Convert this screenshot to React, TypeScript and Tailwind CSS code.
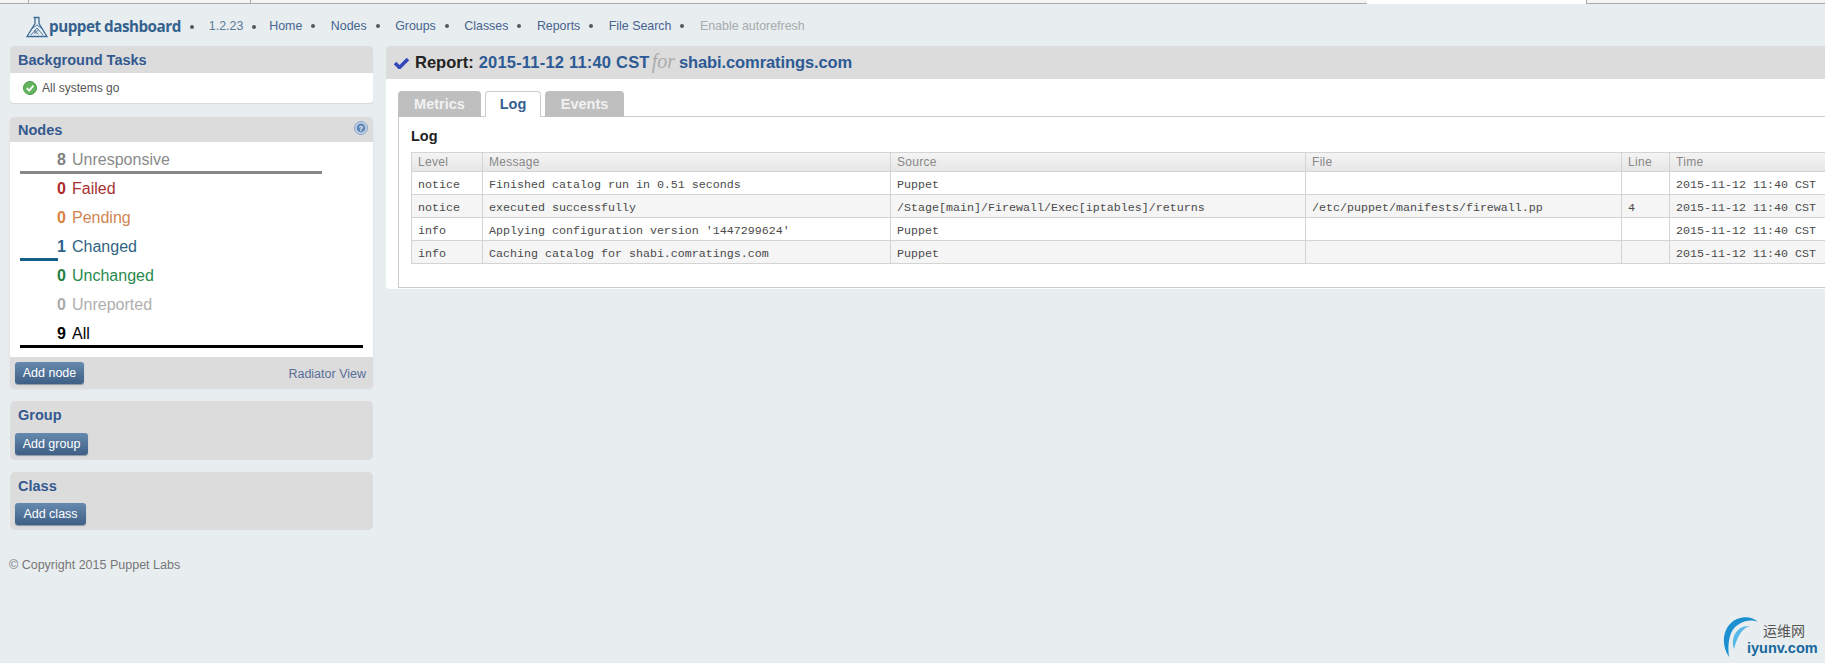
const navItems = ['Home', 'Nodes', 'Groups', 'Classes', 'Reports', 'File Search'];

const nodeRows = [
  { count: 8, barWidth: 302, label: 'Unresponsive', num: 'text-[#808080]', text: 'text-[#8a8a8a]', bar: '#888888' },
  { count: 0, barWidth: 0, label: 'Failed', num: 'text-[#b02a2a]', text: 'text-[#a83232]', bar: '#a83232' },
  { count: 0, barWidth: 0, label: 'Pending', num: 'text-[#d9823f]', text: 'text-[#d08552]', bar: '#d08552' },
  { count: 1, barWidth: 38, label: 'Changed', num: 'text-[#2f5f8a]', text: 'text-[#2f6385]', bar: '#126088' },
  { count: 0, barWidth: 0, label: 'Unchanged', num: 'text-[#1f8040]', text: 'text-[#2c8a4c]', bar: '#2c8a4c' },
  { count: 0, barWidth: 0, label: 'Unreported', num: 'text-[#aaaaaa]', text: 'text-[#aeaeae]', bar: '#aeaeae' },
  { count: 9, barWidth: 343, label: 'All', num: 'text-black', text: 'text-black', bar: '#000000' },
];

const logRows = [
  {
    level: 'notice',
    message: 'Finished catalog run in 0.51 seconds',
    source: 'Puppet',
    file: '',
    line: '',
  },
  {
    level: 'notice',
    message: 'executed successfully',
    source: '/Stage[main]/Firewall/Exec[iptables]/returns',
    file: '/etc/puppet/manifests/firewall.pp',
    line: '4',
  },
  {
    level: 'info',
    message: "Applying configuration version '1447299624'",
    source: 'Puppet',
    file: '',
    line: '',
  },
  {
    level: 'info',
    message: 'Caching catalog for shabi.comratings.com',
    source: 'Puppet',
    file: '',
    line: '',
  },
];

const Bullet = () => <span className="ml-[9px] mr-[15.5px] h-1 w-1 rounded-full bg-[#555]" />;

const Button = ({ label, width }: { label: string; width: string }) => (
  <button
    className={`${width} block h-[22px] rounded-[3px] bg-gradient-to-b from-[#668aaf] to-[#3f5f85] text-center text-[12.5px] leading-[22px] text-white shadow-[0_1px_1px_#8a97a5]`}
  >
    {label}
  </button>
);

const Logo = () => (
  <svg viewBox="0 0 22 22" className="h-[22px] w-[22px]" fill="none" stroke="#3d6c98" strokeWidth="1.3">
    <path d="M7.5 1.5h6M9 1.5v6L1 20.5h20L13 7.5v-6" />
    <path d="M5.5 13 11 9l5.5 4M5 19l6-7 6 7" strokeWidth="0.9" />
    <path d="M9 14v4M12.5 14l-3 2 3 2" strokeWidth="0.9" />
  </svg>
);

const SideHeading = ({ title }: { title: string }) => (
  <h2 className="text-[14.5px] font-bold leading-[25px] text-[#33598f]">{title}</h2>
);

const App = () => {
  return (
    <div className="relative h-[663px] w-full overflow-hidden bg-[#e8edef] font-['Liberation_Sans',Arial,sans-serif]">
      {/* Browser tab strip left over at the top */}
      <div className="flex h-1 bg-[#e8edef]">
        <div className="w-[28px] border-b border-[#aaa] bg-[#f4f4f4]" />
        <div className="w-[222px] border-b border-l border-[#aaa] bg-[#f4f4f4]" />
        <div className="w-[1117px] border-b border-l border-[#aaa] bg-[#f4f4f4]" />
        <div className="w-[219px] bg-white" />
        <div className="flex-1 border-b border-l border-[#aaa] bg-[#f4f4f4]" />
      </div>

      {/* Navbar */}
      <nav className="flex h-[42px] items-center pl-[26px] pt-[3px] text-[12.4px] text-[#47648f]">
        <Logo />
        <span className="ml-[1px] font-['Open_Sans',sans-serif] text-[15.2px] font-bold tracking-[-0.47px] text-[#34628f]">
          puppet dashboard
        </span>
        <span className="ml-[9px] mr-[15px] h-1 w-1 rounded-full bg-[#555]" />
        <span className="text-[#5d7a99]">1.2.23</span>
        <span className="ml-[9px] mr-[13px] h-1 w-1 rounded-full bg-[#555]" />
        {navItems.map((item) => (
          <span key={item} className="flex items-center">
            <a>{item}</a>
            <Bullet />
          </span>
        ))}
        <span className="text-[#a6abae]">Enable autorefresh</span>
      </nav>

      <div className="flex items-start gap-[13px] pl-[10px]">
        {/* Sidebar */}
        <aside className="flex w-[363px] shrink-0 flex-col">
          <section className="overflow-hidden rounded-[4px] bg-white shadow-[0_1px_1px_#d5d9db]">
            <div className="h-[27px] bg-[#dcdcdc] pl-[8px] pt-[2px]">
              <SideHeading title="Background Tasks" />
            </div>
            <div className="flex h-[30px] items-center pl-[13px] text-[12px] text-[#555]">
              <svg viewBox="0 0 14 14" className="mr-[5px] h-[14px] w-[14px]">
                <circle cx="7" cy="7" r="6.5" fill="#62b55c" stroke="#4a9a48" />
                <path d="M3.8 7.2 6.2 9.6 10.4 4.6" fill="none" stroke="#fff" strokeWidth="1.8" />
              </svg>
              All systems go
            </div>
          </section>

          <section className="mt-[14px] overflow-hidden rounded-[4px] bg-white shadow-[0_1px_2px_#d5d9db]">
            <div className="flex h-[25px] items-center justify-between bg-[#dcdcdc] pl-[8px] pr-[5px] pt-[2px]">
              <SideHeading title="Nodes" />
              <svg viewBox="0 0 14 14" className="mb-[5px] h-[14px] w-[14px]">
                <circle cx="7" cy="7" r="6.5" fill="#c3d3e6" stroke="#8aa5c8" />
                <circle cx="7" cy="7" r="4.4" fill="#5f86b5" />
                <text x="7" y="9.6" textAnchor="middle" fontSize="7" fontWeight="700" fill="#fff">
                  ?
                </text>
              </svg>
            </div>
            <div className="pb-[8px] pt-[4px]">
              {nodeRows.map((row) => (
                <div key={row.label} className="h-[29px]">
                  <div className="flex h-[25px] items-center pt-[2px] text-[16px] leading-[23px]">
                    <span className={`w-[56px] text-right font-bold ${row.num}`}>{row.count}</span>
                    <span className={`ml-[6px] ${row.text}`}>{row.label}</span>
                  </div>
                  <div className="ml-[10px]">
                    <div className="h-[3px]" style={{ width: row.barWidth, background: row.bar }} />
                  </div>
                </div>
              ))}
            </div>
            <div className="flex h-[31px] items-start justify-between bg-[#dcdcdc] pl-[5px] pr-[7px] pt-[5px]">
              <Button label="Add node" width="w-[69px]" />
              <a className="pt-[3px] text-[12.5px] text-[#5a6f9a]">Radiator View</a>
            </div>
          </section>

          <section className="mt-[13px] h-[59px] rounded-[5px] bg-[#dcdcdc] pl-[5px]">
            <div className="h-[32px] pl-[3px] pt-[2px]">
              <SideHeading title="Group" />
            </div>
            <Button label="Add group" width="w-[73px]" />
          </section>

          <section className="mt-[12px] h-[58px] rounded-[5px] bg-[#dcdcdc] pl-[5px]">
            <div className="h-[31px] pl-[3px] pt-[2px]">
              <SideHeading title="Class" />
            </div>
            <Button label="Add class" width="w-[71px]" />
          </section>

          <p className="-ml-[1px] mt-[26px] text-[12.5px] text-[#777]">© Copyright 2015 Puppet Labs</p>
        </aside>

        {/* Main content */}
        <main className="min-w-0 flex-1 overflow-hidden rounded-l-[4px] bg-white pb-[1px]">
          <div className="flex h-[33px] items-center bg-[#dcdcdc] pl-[8px] text-[16.5px] font-bold text-[#2d5a94]">
            <svg viewBox="0 0 15 12" className="mr-[6px] h-[12px] w-[15px]">
              <path d="M1 6 5.5 10.5 14 2" fill="none" stroke="#3348b8" strokeWidth="3.6" />
            </svg>
            <span className="text-[#222]">Report:</span>
            <span className="ml-[5px] tracking-[0.2px]">2015-11-12 11:40 CST</span>
            <span className="-mt-[3px] ml-[2px] mr-[4px] font-['Liberation_Serif',serif] text-[20px] font-normal italic leading-[20px] text-[#aaa]">
              for
            </span>
            <span className="tracking-[-0.1px]">shabi.comratings.com</span>
          </div>

          <div className="pl-[12px] pt-[12px]">
            <div className="relative z-10 -mb-px flex h-[26px] items-stretch gap-[5px] text-[14.5px] font-bold">
              <div className="flex w-[83px] items-center justify-center rounded-t-[4px] bg-[#bfbfbf] pt-[2px] text-[#f1f1f1]">
                Metrics
              </div>
              <div className="-mx-[1px] flex w-[56px] items-center justify-center rounded-t-[4px] border border-b-0 border-[#ccc] bg-white pt-[1px] text-[#34608f]">
                Log
              </div>
              <div className="flex w-[79px] items-center justify-center rounded-t-[4px] bg-[#bfbfbf] pt-[2px] text-[#f1f1f1]">
                Events
              </div>
            </div>

            <div className="h-[172px] border-y border-l border-[#ccc] bg-white pl-[12px]">
              <h3 className="pt-[10px] text-[14.5px] font-bold leading-[19px] text-[#222]">Log</h3>
              <table className="mt-[6px] w-[1428px] table-fixed border-collapse">
                <colgroup>
                  <col className="w-[71px]" />
                  <col className="w-[408px]" />
                  <col className="w-[415px]" />
                  <col className="w-[316px]" />
                  <col className="w-[48px]" />
                  <col className="w-[170px]" />
                </colgroup>
                <thead>
                  <tr className="h-[19px] bg-gradient-to-b from-[#f4f4f4] to-[#e6e6e6] text-left text-[12px] tracking-[0.3px] text-[#888]">
                    {['Level', 'Message', 'Source', 'File', 'Line', 'Time'].map((h) => (
                      <th key={h} className="border border-[#d4d4d4] px-[6px] font-normal">
                        {h}
                      </th>
                    ))}
                  </tr>
                </thead>
                <tbody className="font-['Liberation_Mono',monospace] text-[11.67px] leading-[16px] text-[#4a4a4a]">
                  {logRows.map((row, i) => (
                    <tr key={row.message} className={`h-[23px] ${i % 2 === 1 ? 'bg-[#f5f5f5]' : 'bg-white'}`}>
                      <td className="border border-[#d4d4d4] px-[6px] pt-[4px]">{row.level}</td>
                      <td className="border border-[#d4d4d4] px-[6px] pt-[4px]">{row.message}</td>
                      <td className="border border-[#d4d4d4] px-[6px] pt-[4px]">{row.source}</td>
                      <td className="border border-[#d4d4d4] px-[6px] pt-[4px]">{row.file}</td>
                      <td className="border border-[#d4d4d4] px-[6px] pt-[4px]">{row.line}</td>
                      <td className="border border-[#d4d4d4] px-[6px] pt-[4px]">2015-11-12 11:40 CST</td>
                    </tr>
                  ))}
                </tbody>
              </table>
            </div>
          </div>
        </main>
      </div>

      {/* Watermark */}
      <div className="absolute bottom-[5px] left-[1722px] h-[42px] w-[100px]">
        <svg viewBox="0 0 40 42" className="absolute left-0 top-0 h-[42px] w-[40px]" fill="none">
          <path d="M7 41C-2 28 1 9 15 3c8-3 16-2 21 3C28 2 14 6 9 17c-3 8-3 16-2 24Z" fill="#1b8fd0" />
          <path d="M12 33C8 22 15 9 28 10c-8 2-13 11-16 23Z" fill="#58b8e8" />
        </svg>
        <span className="absolute left-[41px] top-[5px] whitespace-nowrap font-['Noto_Sans_CJK_SC',sans-serif] text-[14px] leading-[18px] text-[#555]">
          运维网
        </span>
        <span className="absolute left-[25px] top-[23px] whitespace-nowrap font-['Liberation_Sans',sans-serif] text-[14.5px] font-bold leading-[18px] text-[#17679f]">
          iyunv.com
        </span>
      </div>
    </div>
  );
};

export default App;
